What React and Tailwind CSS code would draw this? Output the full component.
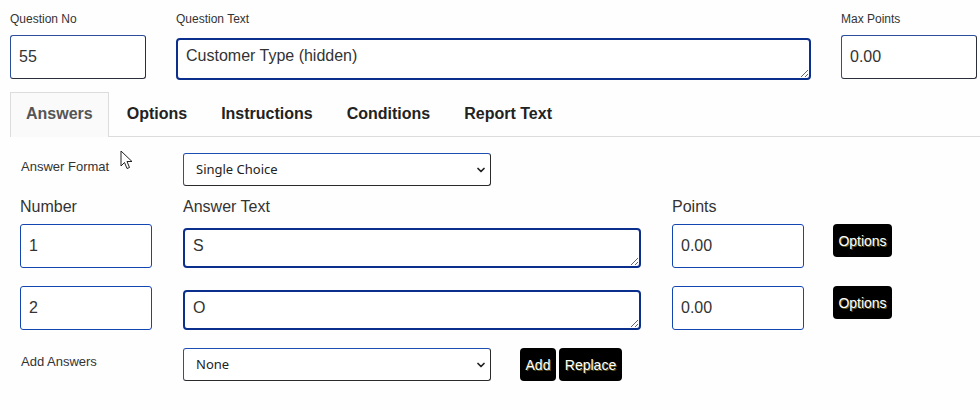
import { ChevronDown } from 'lucide-react';

const FONT = { fontFamily: '"Liberation Sans", Arial, sans-serif' };

const TABS = ['Answers', 'Options', 'Instructions', 'Conditions', 'Report Text'];

const ANSWERS = [
  { number: '1', text: 'S', points: '0.00' },
  { number: '2', text: 'O', points: '0.00' },
];

function Label({ children, className = '' }) {
  return <label className={`block text-[12px] leading-[14px] text-[#333] ${className}`}>{children}</label>;
}

function Box({ value, className = '' }) {
  return (
    <input
      readOnly
      value={value}
      className={`h-[44px] rounded-[3px] border bg-white px-[8px] text-[16px] text-[#333] outline-none ${className}`}
    />
  );
}

function Area({ value, className = '' }) {
  return (
    <textarea
      readOnly
      value={value}
      className={`block rounded-[4px] border-2 border-[#0b2f8c] bg-white px-[8px] pt-[5px] text-[16px] leading-[22px] text-[#333] outline-none ${className}`}
    />
  );
}

function Select({ value }) {
  return (
    <div className="relative w-[308px] h-[33px]">
      <select
        value={value}
        onChange={() => {}}
        className="h-full w-full appearance-none rounded-[3px] border border-[#2b2b2b] border-t-[#1d4fb3] border-l-[#3a4f80] bg-white pl-[12px] text-[13px] text-[#222] outline-none"
        style={{ fontFamily: '"Noto Sans", "Open Sans", sans-serif' }}
      >
        <option>{value}</option>
      </select>
      <ChevronDown size={12} strokeWidth={3.5} className="pointer-events-none absolute right-[4px] top-[11px] text-[#222]" />
    </div>
  );
}

function BlackButton({ children, className = '' }) {
  return (
    <button className={`rounded-[4px] bg-black text-[14px] leading-[16px] text-white [text-shadow:1px_1px_0_#5c5420] ${className}`}>
      {children}
    </button>
  );
}

function Cursor() {
  return (
    <svg width="14" height="21" viewBox="0 0 14 21" className="absolute left-[120px] top-[150px]">
      <path d="M1 1 L1 16 L4.5 12.5 L7 18.5 L9.5 17.5 L7 11.5 L12 11.5 Z" fill="white" stroke="#222" strokeWidth="1" strokeLinejoin="round" />
    </svg>
  );
}

export default function App() {
  return (
    <div className="relative w-[980px] h-[410px] overflow-hidden bg-[#fefefe]" style={FONT}>
      {/* Question header */}
      <div className="flex pl-[10px] pt-[12px]">
        <div className="w-[136px]">
          <Label className="mb-[9px]">Question No</Label>
          <Box value="55" className="w-[136px] border-[#2a2f3a] border-l-[#2c4f9c] border-t-[#2c4f9c]" />
        </div>
        <div className="ml-[30px] w-[635px]">
          <Label className="mb-[12px]">Question Text</Label>
          <Area value="Customer Type (hidden)" className="w-[635px] h-[42px]" />
        </div>
        <div className="ml-[30px] w-[136px]">
          <Label className="mb-[9px]">Max Points</Label>
          <Box value="0.00" className="w-[136px] border-[#2a2f3a] border-l-[#2c4f9c] border-t-[#2c4f9c]" />
        </div>
      </div>

      {/* Tabs */}
      <div className="ml-[10px] mt-[12px] flex gap-[2px] border-b border-[#dcdcdc]">
        {TABS.map((t, i) => (
          <div
            key={t}
            className={`-mb-px h-[45px] px-[15px] pt-[11px] text-[16px] font-bold leading-[20px] ${
              i === 0
                ? 'border border-b-0 border-[#dcdcdc] bg-[#fafafa] text-[#555]'
                : 'border border-transparent text-[#222]'
            }`}
          >
            {t}
          </div>
        ))}
      </div>

      {/* Answer format */}
      <div className="mt-[16px] flex items-center pl-[21px]">
        <span className="w-[162px] pb-[5px] text-[13px] text-[#333]">Answer Format</span>
        <Select value="Single Choice" />
      </div>

      {/* Answers grid */}
      <div className="mt-[11px] pl-[20px]">
        <div className="flex text-[16px] leading-[20px] text-[#333]">
          <span className="w-[163px]">Number</span>
          <span className="w-[489px]">Answer Text</span>
          <span>Points</span>
        </div>
        <div className="mt-[7px] flex flex-col gap-[18px]">
          {ANSWERS.map(a => (
            <div key={a.number} className="flex items-start">
              <Box value={a.number} className="w-[132px] border-[#1346b0]" />
              <Area value={a.text} className="ml-[31px] mt-[4px] h-[40px] w-[458px]" />
              <Box value={a.points} className="ml-[31px] w-[132px] border-[#1346b0]" />
              <BlackButton className="ml-[29px] h-[33px] w-[59px]">Options</BlackButton>
            </div>
          ))}
        </div>
      </div>

      {/* Add answers */}
      <div className="mt-[18px] flex items-center pl-[21px]">
        <span className="w-[162px] pb-[6px] text-[13px] text-[#333]">Add Answers</span>
        <Select value="None" />
        <BlackButton className="ml-[29px] h-[33px] w-[36px]">Add</BlackButton>
        <BlackButton className="ml-[3px] h-[33px] w-[63px]">Replace</BlackButton>
      </div>

      <Cursor />
    </div>
  );
}
